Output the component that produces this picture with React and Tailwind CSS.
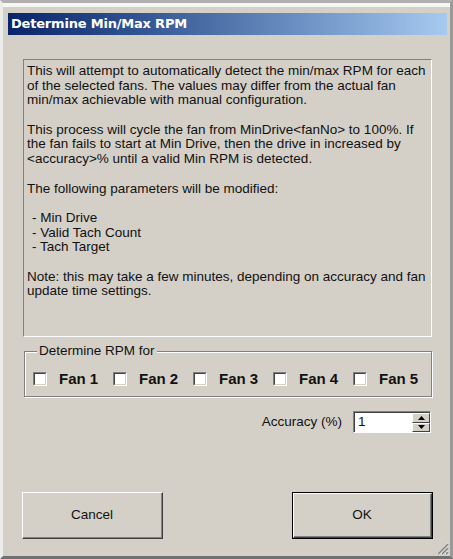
import React from "react";

const LINES = [
  ["This will attempt to automatically detect the min/max RPM for each"],
  ["of the selected fans. The values may differ from the actual fan"],
  ["min/max achievable with manual configuration."],
  [""],
  ["This process will cycle the fan from MinDrive<fanNo> to 100%. If"],
  ["the fan fails to start at Min Drive, then the drive in increased by"],
  ["<accuracy>% until a valid Min RPM is detected."],
  [""],
  ["The following parameters will be modified:"],
  [""],
  ["- Min Drive", true],
  ["- Valid Tach Count", true],
  ["- Tach Target", true],
  [""],
  ["Note: this may take a few minutes, depending on accuracy and fan"],
  ["update time settings."],
];

function Check() {
  return (
    <span className="block shrink-0 w-[14px] h-[14px] border-t border-l border-t-[#808080] border-l-[#808080] border-b border-r border-b-white border-r-white">
      <span className="block w-full h-full border-t border-l border-t-[#404040] border-l-[#404040] border-b border-r border-b-[#d4d0c8] border-r-[#d4d0c8] bg-white" />
    </span>
  );
}

function Btn({ children, def }) {
  return (
    <div className={"w-[141px] h-[47px] flex " + (def ? "border border-black" : "")}>
      <div className="flex-1 flex border-t border-l border-t-white border-l-white border-b border-r border-b-[#404040] border-r-[#404040]">
        <div className="flex-1 flex items-center justify-center border-b border-r border-b-[#808080] border-r-[#808080] text-[13.5px] text-[#111]">
          {children}
        </div>
      </div>
    </div>
  );
}

export default function App() {
  return (
    <div className="w-[453px] h-[559px] overflow-hidden bg-[#d4d0c8] border-t-[3px] border-t-[#b0b0b0] border-b-[3px] border-b-[#707070] border-r-[3px] border-r-[#9a9a9a] border-l-[3px] border-l-[#ececea] font-['Liberation_Sans',Arial,sans-serif] text-[#111]">
      <div className="h-full flex flex-col border-t-[4px] border-t-[#f6f6f2] relative">
        {/* title bar */}
        <div className="mt-[6px] ml-[5px] mr-[3px] h-[22px] flex items-center pl-[3px] bg-gradient-to-r from-[#0a246a] to-[#a6caf0]">
          <span className="text-white font-bold text-[13px] font-['DejaVu_Sans',sans-serif] tracking-[-0.2px]">
            Determine Min/Max RPM
          </span>
        </div>

        {/* description */}
        <div className="mt-[24px] ml-[20px] mr-[18px] h-[278px] border-t border-l border-t-[#808080] border-l-[#808080] border-b border-r border-b-white border-r-white pt-[4px] pl-[3px]">
          {LINES.map(([t, indent], i) => (
            <div key={i} className={"h-[14.7px] leading-[14.7px] text-[13.5px] whitespace-nowrap " + (indent ? "pl-[5px]" : "")}>
              {t}
            </div>
          ))}
        </div>

        {/* group box */}
        <div className="relative mt-[14px] ml-[21px] mr-[18px] h-[46px] border border-[#808080] shadow-[inset_1px_1px_0_#fff,1px_1px_0_#fff]">
          <span className="absolute left-[12px] -top-[9px] px-[2px] bg-[#d4d0c8] text-[13.5px] leading-[16px]">
            Determine RPM for
          </span>
          <div className="flex items-center gap-[15px] pl-[8px] pt-[19px]">
            {[1, 2, 3, 4, 5].map((n) => (
              <div key={n} className="flex items-center gap-[12px] w-[65px] shrink-0">
                <Check />
                <span className="font-bold text-[15px] leading-[16px] whitespace-nowrap">Fan {n}</span>
              </div>
            ))}
          </div>
        </div>

        {/* accuracy */}
        <div className="mt-[14px] mr-[19px] flex items-center justify-end gap-[11px]">
          <span className="text-[13.5px]">Accuracy (%)</span>
          <div className="w-[78px] h-[22px] flex border-t border-l border-t-[#808080] border-l-[#808080] border-b border-r border-b-white border-r-white">
            <div className="flex-1 flex items-center bg-white border-t border-l border-t-[#404040] border-l-[#404040] pl-[3px] text-[13.5px]">
              1
            </div>
            <div className="w-[18px] flex flex-col bg-white border-t border-t-[#404040]">
              {["up", "down"].map((d) => (
                <div key={d} className="flex-1 flex items-center justify-center bg-[#d4d0c8] border-t border-l border-t-white border-l-white border-b border-r border-b-[#404040] border-r-[#404040]">
                  <svg width="7" height="4" viewBox="0 0 7 4">
                    {d === "up" ? <path d="M0 4h7L3.5 0z" fill="#000" /> : <path d="M0 0h7L3.5 4z" fill="#000" />}
                  </svg>
                </div>
              ))}
            </div>
          </div>
        </div>

        {/* buttons */}
        <div className="mt-[59px] ml-[19px] mr-[17px] flex justify-between">
          <Btn>Cancel</Btn>
          <Btn def>OK</Btn>
        </div>

        {/* resize grip */}
        <svg className="absolute right-[1px] bottom-[1px]" width="14" height="14" viewBox="0 0 14 14">
          <path d="M13 2L2 13M13 6L6 13M13 10L10 13" stroke="#fff" strokeWidth="1" />
          <path d="M13 3L3 13M13 7L7 13M13 11L11 13" stroke="#808080" strokeWidth="1.5" />
        </svg>
      </div>
    </div>
  );
}
